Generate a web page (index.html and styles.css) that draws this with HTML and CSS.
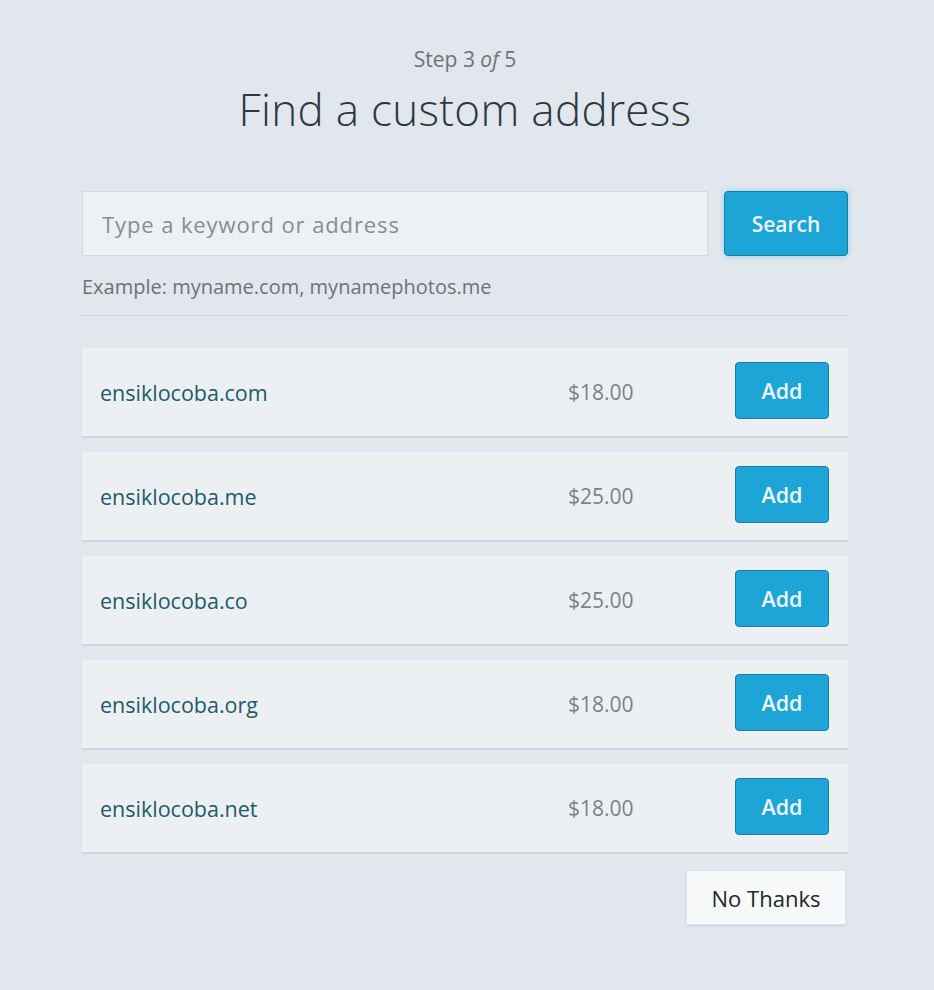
FILE: index.html
```html
<!DOCTYPE html>
<html>
<head>
<meta charset="utf-8">
<link rel="stylesheet" href="styles.css">
</head>
<body>
<div class="page">
  <div class="step">Step 3 <em>of</em> 5</div>
  <h1 class="title">Find a custom address</h1>
  <div class="search-row">
    <div class="input">Type a keyword or address</div>
    <button class="btn search">Search</button>
  </div>
  <div class="example"><span class="ex-label">Example:</span> myname.com, mynamephotos.me</div>
  <div class="rule"></div>
  <div class="list">
    <div class="row"><span class="domain">ensiklocoba.com</span><span class="price">$18.00</span><button class="btn add">Add</button></div>
    <div class="row"><span class="domain">ensiklocoba.me</span><span class="price">$25.00</span><button class="btn add">Add</button></div>
    <div class="row"><span class="domain">ensiklocoba.co</span><span class="price">$25.00</span><button class="btn add">Add</button></div>
    <div class="row"><span class="domain">ensiklocoba.org</span><span class="price">$18.00</span><button class="btn add">Add</button></div>
    <div class="row"><span class="domain">ensiklocoba.net</span><span class="price">$18.00</span><button class="btn add">Add</button></div>
  </div>
  <div class="footer"><button class="no-thanks">No Thanks</button></div>
</div>
</body>
</html>
```
FILE: styles.css
```css
html, body {
  margin: 0;
  padding: 0;
  background: #e2e7ed;
  font-family: "Open Sans", "Noto Sans", sans-serif;
  height: 100%;
}
.page {
  width: 766px;
  margin-left: 82px;
  padding-top: 45px;
}
.step {
  text-align: center;
  font-size: 21px;
  line-height: 28px;
  color: #6b747c;
  font-weight: 400;
}
.step em { font-style: italic; }
.title {
  margin: 6px 0 0;
  text-align: center;
  font-size: 44px;
  line-height: 60px;
  font-weight: 300;
  color: #2c3843;
  letter-spacing: 0.3px;
}
.search-row {
  display: flex;
  gap: 16px;
  margin-top: 52px;
  height: 65px;
}
.input {
  flex: 1;
  box-sizing: border-box;
  background: #eef1f4;
  border: 1px solid #d3d9df;
  display: flex;
  align-items: center;
  padding-left: 19px;
  font-size: 22px;
  letter-spacing: 0.9px;
  color: #858d95;
}
.btn {
  font-family: "Open Sans", "Noto Sans", sans-serif;
  background: #1ea5d7;
  border: 1px solid #127ea6;
  border-radius: 4px;
  color: #eaf8ff;
  font-weight: 600;
  font-size: 21px;
  cursor: pointer;
  padding: 0;
}
.search {
  width: 124px;
  box-shadow: 0 0 6px rgba(40, 190, 240, 0.45);
}
.example {
  margin-top: 17px;
  font-size: 20px;
  line-height: 28px;
  color: #6b737b;
}
.ex-label { color: #6a7279; }
.rule {
  margin-top: 14px;
  height: 1px;
  background: #d0d6dc;
}
.list {
  margin-top: 32px;
  display: flex;
  flex-direction: column;
  gap: 16px;
}
.row {
  height: 88px;
  box-sizing: border-box;
  background: #edf0f3;
  box-shadow: 0 2px 1px rgba(150, 160, 170, 0.25);
  display: flex;
  align-items: center;
  padding-left: 18px;
  padding-right: 19px;
}
.domain {
  flex: 1;
  font-size: 21.5px;
  color: #215a6b;
}
.price {
  font-size: 21px;
  color: #7a8289;
  width: 70px;
  margin-right: 97px;
}
.add {
  width: 94px;
  height: 57px;
  margin-top: -3px;
  font-size: 21.5px;
}
.footer {
  display: flex;
  justify-content: flex-end;
  margin-top: 18px;
  padding-right: 2px;
}
.no-thanks {
  font-family: "Open Sans", "Noto Sans", sans-serif;
  width: 160px;
  height: 55px;
  background: #f8f9fa;
  border: 1px solid #e0e4e8;
  border-radius: 2px;
  box-shadow: 0 1px 2px rgba(150, 160, 170, 0.35);
  font-size: 22px;
  color: #22272c;
  cursor: pointer;
}
```
